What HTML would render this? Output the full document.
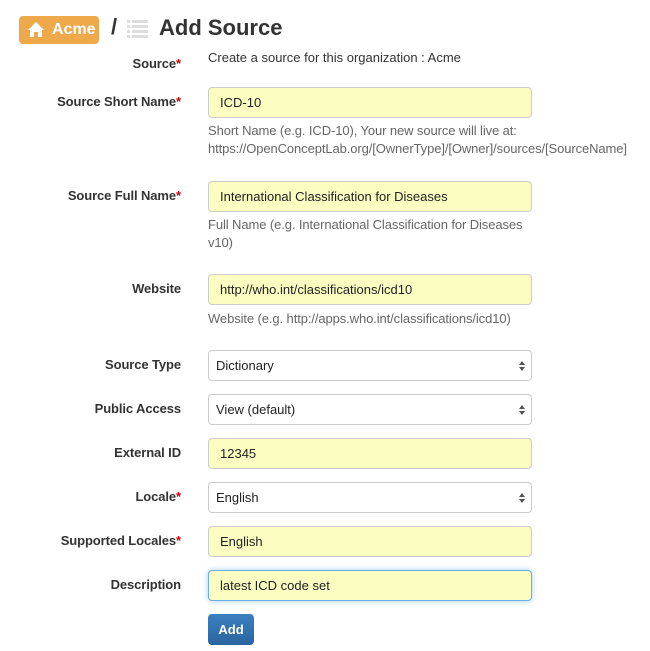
<!DOCTYPE html>
<html><head><style>
body{margin:0;width:650px;height:651px;background:#fff;font-family:"Liberation Sans",sans-serif;position:relative;overflow:hidden;color:#333}
.a{position:absolute}
.lbl{position:absolute;right:469px;font-size:13px;font-weight:bold;color:#333;white-space:nowrap;letter-spacing:-0.1px}
.lbl i{color:#c00;font-style:normal}
.in{position:absolute;left:208px;border:1px solid #ccc;border-radius:4px;background:#fbfdc1;box-sizing:border-box;width:324px;height:31px;font-size:13px;line-height:29px;padding-left:11px;color:#222}
.sel{background:#fff;padding-left:7px}
.sel:after{content:"";position:absolute;right:6px;top:10px;border:3px solid transparent;border-bottom:4px solid #555;border-top:0}
.sel:before{content:"";position:absolute;right:6px;top:16px;border:3px solid transparent;border-top:4px solid #555;border-bottom:0}
.help{position:absolute;left:208px;font-size:13px;color:#666;line-height:18px;letter-spacing:-0.1px}
</style></head><body>
<div class="a" style="left:19px;top:16px;width:80px;height:28px;background:#eea94b;border-radius:4px;color:#fff;font-weight:bold;font-size:16px;line-height:28px">
<svg class="a" style="left:9px;top:6px" width="16" height="15" viewBox="0 0 16 15"><path d="M8 0L0 8h2v7h4v-5h4v5h4V8h2z" fill="#fff"/></svg>
<span class="a" style="left:33px">Acme</span></div>
<div class="a" style="left:111px;top:14px;font-size:22px;font-weight:bold;color:#333">/</div>
<svg class="a" style="left:127px;top:19px" width="21" height="20" viewBox="0 0 21 20" fill="#ddd"><rect x="0" y="1" width="3" height="3"/><rect x="5" y="1" width="16" height="3"/><rect x="0" y="6" width="3" height="3"/><rect x="5" y="6" width="16" height="3"/><rect x="0" y="11" width="3" height="3"/><rect x="5" y="11" width="16" height="3"/><rect x="0" y="16" width="3" height="3"/><rect x="5" y="16" width="16" height="3"/></svg>
<div class="a" style="left:159px;top:15px;font-size:22px;font-weight:bold;color:#333">Add Source</div>

<div class="lbl" style="top:56px">Source<i>*</i></div>
<div class="a" style="left:208px;top:50px;font-size:13px">Create a source for this organization : Acme</div>

<div class="lbl" style="top:94px">Source Short Name<i>*</i></div>
<div class="in" style="top:87px">ICD-10</div>
<div class="help" style="top:122px">Short Name (e.g. ICD-10), Your new source will live at:<br>https://OpenConceptLab.org/[OwnerType]/[Owner]/sources/[SourceName]</div>

<div class="lbl" style="top:188px">Source Full Name<i>*</i></div>
<div class="in" style="top:181px">International Classification for Diseases</div>
<div class="help" style="top:216px">Full Name (e.g. International Classification for Diseases<br>v10)</div>

<div class="lbl" style="top:281px">Website</div>
<div class="in" style="top:274px">http://who.int/classifications/icd10</div>
<div class="help" style="top:310px">Website (e.g. http://apps.who.int/classifications/icd10)</div>

<div class="lbl" style="top:357px">Source Type</div>
<div class="in sel" style="top:350px">Dictionary</div>
<div class="lbl" style="top:401px">Public Access</div>
<div class="in sel" style="top:394px">View (default)</div>
<div class="lbl" style="top:445px">External ID</div>
<div class="in" style="top:438px">12345</div>
<div class="lbl" style="top:489px">Locale<i>*</i></div>
<div class="in sel" style="top:482px">English</div>
<div class="lbl" style="top:533px">Supported Locales<i>*</i></div>
<div class="in" style="top:526px">English</div>
<div class="lbl" style="top:577px">Description</div>
<div class="in" style="top:570px;border-color:#66afe9;box-shadow:0 0 6px rgba(102,175,233,.6)">latest ICD code set</div>
<div class="a" style="left:208px;top:614px;width:46px;height:31px;border-radius:4px;background:linear-gradient(#3a80c0,#2a659f);color:#fff;font-weight:bold;font-size:13px;line-height:31px;text-align:center">Add</div>
</body></html>
